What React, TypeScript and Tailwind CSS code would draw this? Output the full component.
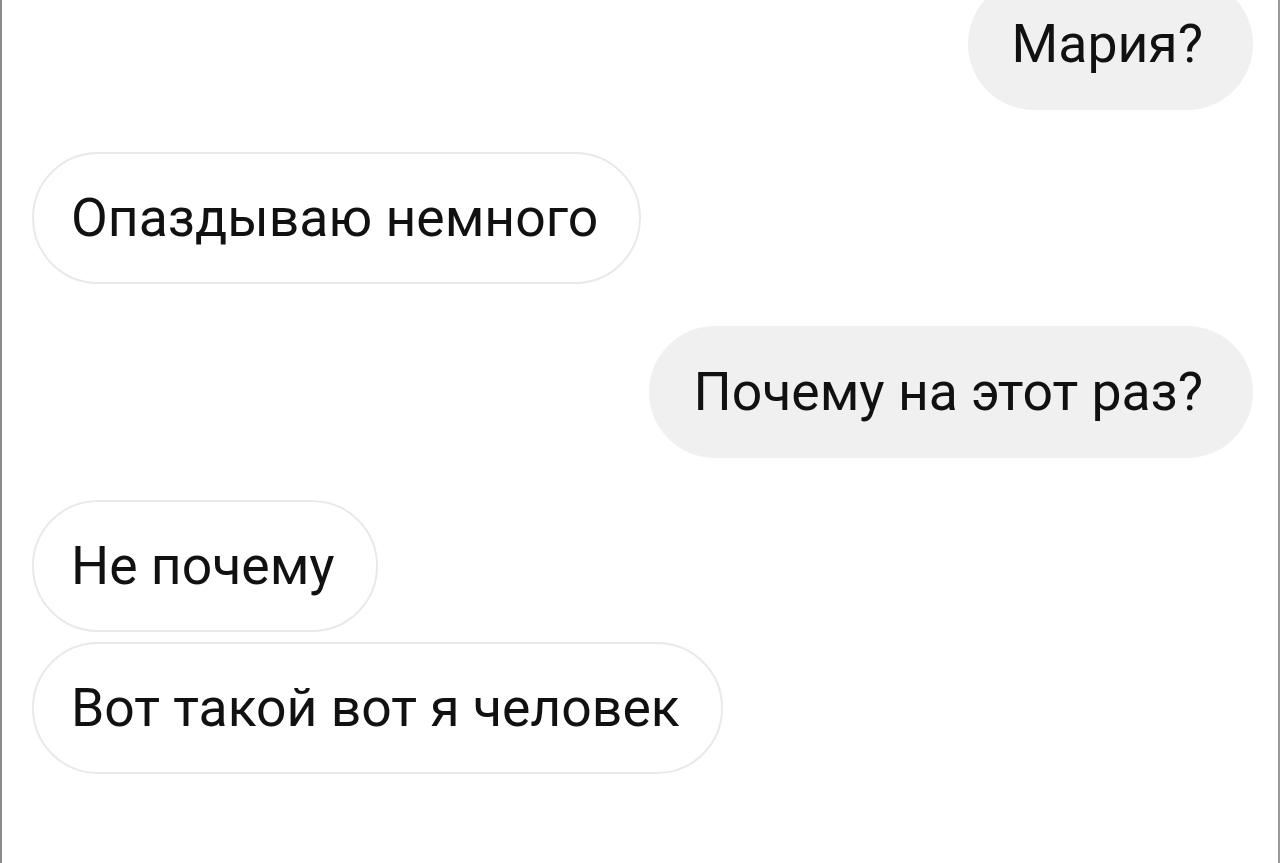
const messages = [
  { text: "Мария?", mine: true },
  { text: "Опаздываю немного", mine: false },
  { text: "Почему на этот раз?", mine: true },
  { text: "Не почему", mine: false, tight: true },
  { text: "Вот такой вот я человек", mine: false },
];

function Bubble({ text, mine }: { text: string; mine: boolean }) {
  return (
    <div
      className={`flex h-[132px] items-center rounded-full text-[53.5px] text-[#111] ${
        mine
          ? "self-end bg-[#f0f0f0] pl-[44px] pr-[50px]"
          : "self-start border-2 border-[#e9e9e9] bg-white pl-[37px] pr-[41px]"
      }`}
    >
      <span className="leading-none">{text}</span>
    </div>
  );
}

export default function App() {
  return (
    <div
      className="h-[863px] w-[1280px] overflow-hidden border-l-2 border-r-2 border-l-[#8a8a8a] border-r-[#9a9a9a] bg-white"
      style={{ fontFamily: "Roboto, 'Liberation Sans', sans-serif" }}
    >
      <div className="-mt-[22px] flex flex-col pl-[30px] pr-[25px]">
        {messages.map((m, i) => (
          <div
            key={i}
            className={`flex flex-col ${i === 0 ? "" : m.tight === undefined && messages[i - 1].tight ? "mt-[10px]" : "mt-[42px]"}`}
          >
            <Bubble text={m.text} mine={m.mine} />
          </div>
        ))}
      </div>
    </div>
  );
}
